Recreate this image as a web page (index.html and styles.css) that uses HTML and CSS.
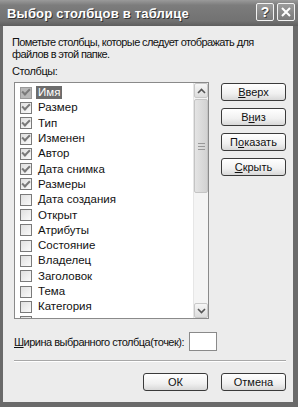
FILE: index.html
```html
<!DOCTYPE html>
<html lang="ru">
<head>
  <meta charset="UTF-8">
  <title>Выбор столбцов в таблице</title>
  <link rel="stylesheet" href="styles.css">
</head>
<body>
  <div class="window">
    <div class="titlebar">
      <span class="title">Выбор столбцов в таблице</span>
      <div class="title-buttons">
        <span class="tbtn">?</span>
        <span class="tbtn">
          <svg width="12" height="12" viewBox="0 0 12 12"><path d="M2 2 L10 10 M10 2 L2 10" stroke="#fff" stroke-width="2" fill="none"/></svg>
        </span>
      </div>
    </div>

    <div class="content">
      <p class="desc">Пометьте столбцы, которые следует отображать для файлов в этой папке.</p>
      <div class="label">Столбцы:</div>

      <div class="main-row">
        <div class="listbox">
          <ul class="items">
            <li class="item selected"><span class="check on"></span><span class="name">Имя</span></li>
            <li class="item"><span class="check on"></span><span class="name">Размер</span></li>
            <li class="item"><span class="check on"></span><span class="name">Тип</span></li>
            <li class="item"><span class="check on"></span><span class="name">Изменен</span></li>
            <li class="item"><span class="check on"></span><span class="name">Автор</span></li>
            <li class="item"><span class="check on"></span><span class="name">Дата снимка</span></li>
            <li class="item"><span class="check on"></span><span class="name">Размеры</span></li>
            <li class="item"><span class="check"></span><span class="name">Дата создания</span></li>
            <li class="item"><span class="check"></span><span class="name">Открыт</span></li>
            <li class="item"><span class="check"></span><span class="name">Атрибуты</span></li>
            <li class="item"><span class="check"></span><span class="name">Состояние</span></li>
            <li class="item"><span class="check"></span><span class="name">Владелец</span></li>
            <li class="item"><span class="check"></span><span class="name">Заголовок</span></li>
            <li class="item"><span class="check"></span><span class="name">Тема</span></li>
            <li class="item"><span class="check"></span><span class="name">Категория</span></li>
            <li class="item"><span class="check"></span></li>
          </ul>
          <div class="scrollbar">
            <div class="sb-arrow">
              <svg width="9" height="6" viewBox="0 0 9 6"><path d="M1 5 L4.5 1.5 L8 5" stroke="#555" stroke-width="1.6" fill="none"/></svg>
            </div>
            <div class="sb-thumb"><span class="grip"></span></div>
            <div class="sb-track"></div>
            <div class="sb-arrow">
              <svg width="9" height="6" viewBox="0 0 9 6"><path d="M1 1 L4.5 4.5 L8 1" stroke="#555" stroke-width="1.6" fill="none"/></svg>
            </div>
          </div>
        </div>

        <div class="side-buttons">
          <button class="btn"><u>В</u>верх</button>
          <button class="btn">В<u>н</u>из</button>
          <button class="btn">П<u>о</u>казать</button>
          <button class="btn"><u>С</u>крыть</button>
        </div>
      </div>

      <div class="width-row">
        <span class="width-label"><u>Ш</u>ирина выбранного столбца(точек):</span>
        <span class="width-input"></span>
      </div>

      <hr class="separator">

      <div class="footer">
        <button class="btn">ОК</button>
        <button class="btn">Отмена</button>
      </div>
    </div>
  </div>
</body>
</html>
```

FILE: styles.css
```css
* {
  box-sizing: border-box;
  margin: 0;
  padding: 0;
}

body {
  width: 298px;
  height: 407px;
  font-family: 'Liberation Sans', 'DejaVu Sans', sans-serif;
  font-size: 11px;
  color: #111;
  background-color: #6a6a6a;
}

.window {
  width: 298px;
  height: 407px;
  display: flex;
  flex-direction: column;
  background-color: #6a6a6a;
  padding: 0 5px 5px 3px;
}

.titlebar {
  height: 26px;
  margin: 0 -5px 0 -3px;
  padding: 0 3px 0 7px;
  display: flex;
  align-items: center;
  justify-content: space-between;
  background: linear-gradient(to bottom, #9a9a9a, #7c7c7c 20%, #727272 80%, #5e5e5e);
}

.title {
  color: #fff;
  font-weight: 700;
  font-size: 13px;
  letter-spacing: 0.2px;
  text-shadow: 1px 1px 0 #333;
}

.title-buttons {
  display: flex;
  gap: 3px;
  margin-top: -2px;
}

.tbtn {
  width: 18px;
  height: 18px;
  border: 1px solid #f2f2f2;
  border-radius: 2px;
  background: linear-gradient(to bottom, #9c9c9c, #7a7a7a);
  color: #fff;
  font-weight: 700;
  font-size: 14px;
  display: flex;
  align-items: center;
  justify-content: center;
  text-shadow: 1px 1px 0 #444;
}

.content {
  flex: 1;
  background-color: #ececec;
  padding: 10px 7px 0 11px;
  display: flex;
  flex-direction: column;
}

.desc {
  margin-left: -2px;
  line-height: 12px;
  width: 270px;
  letter-spacing: -0.6px;
}

.label {
  margin-top: 5px;
  margin-left: -2px;
  line-height: 13px;
  letter-spacing: -0.4px;
}

.main-row {
  display: flex;
  gap: 12px;
  margin-top: 4px;
}

.listbox {
  width: 195px;
  height: 237px;
  border: 1px solid #8a8a8a;
  background-color: #fff;
  display: flex;
  overflow: hidden;
}

.items {
  flex: 1;
  list-style: none;
  padding: 2px 0 0 5px;
}

.item {
  height: 15.3px;
  display: flex;
  align-items: center;
  gap: 4px;
  font-size: 11.5px;
}

.check {
  width: 12px;
  height: 12px;
  border: 1px solid #7a7a7a;
  background: linear-gradient(to bottom right, #e0e0e0, #fafafa);
  display: flex;
  align-items: center;
  justify-content: center;
}

.check.on::before {
  content: "";
  width: 6px;
  height: 3px;
  border-left: 2px solid #7a7a7a;
  border-bottom: 2px solid #7a7a7a;
  transform: rotate(-45deg) translate(1px, -1px);
}

.item .name {
  padding: 0 2px;
  line-height: 13px;
}

.item.selected .check {
  background: #b8b8b8;
  border-color: #9a9a9a;
}

.item.selected .name {
  background-color: #6c6c6c;
  color: #fff;
}

.scrollbar {
  width: 15px;
  display: flex;
  flex-direction: column;
  background-color: #f4f4f4;
  border-left: 1px solid #e6e6e6;
}

.sb-arrow {
  height: 15px;
  border: 1px solid #c8c8c8;
  border-radius: 2px;
  background: linear-gradient(to bottom, #f6f6f6, #dcdcdc);
  display: flex;
  align-items: center;
  justify-content: center;
}

.sb-thumb {
  height: 94px;
  margin-top: 1px;
  border: 1px solid #c4c4c4;
  border-radius: 2px;
  background: linear-gradient(to right, #e4e4e4, #d2d2d2);
  display: flex;
  align-items: center;
  justify-content: center;
}

.grip {
  width: 7px;
  height: 7px;
  border-top: 1px solid #999;
  border-bottom: 1px solid #999;
  background: linear-gradient(to bottom, transparent 2px, #999 2px, #999 3px, transparent 3px);
}

.sb-track {
  flex: 1;
}

.side-buttons {
  display: flex;
  flex-direction: column;
  gap: 7px;
  padding-top: 1px;
}

.btn {
  width: 65px;
  height: 18px;
  font-family: inherit;
  font-size: 11px;
  color: #111;
  border: 1px solid #3a3a3a;
  border-radius: 3px;
  background: linear-gradient(to bottom, #ffffff, #f0f0f0 60%, #d8d8d8);
  cursor: pointer;
}

.width-row {
  display: flex;
  align-items: center;
  gap: 5px;
  margin-top: 13px;
}

.width-label {
  letter-spacing: -0.5px;
}

.width-input {
  width: 28px;
  height: 19px;
  border: 1px solid #8a8a8a;
  background-color: #fff;
}

.separator {
  border: none;
  border-top: 1px solid #a8a8a8;
  border-bottom: 1px solid #fff;
  margin-top: 9px;
}

.footer {
  display: flex;
  justify-content: flex-end;
  gap: 13px;
  margin-top: 11px;
}
```
